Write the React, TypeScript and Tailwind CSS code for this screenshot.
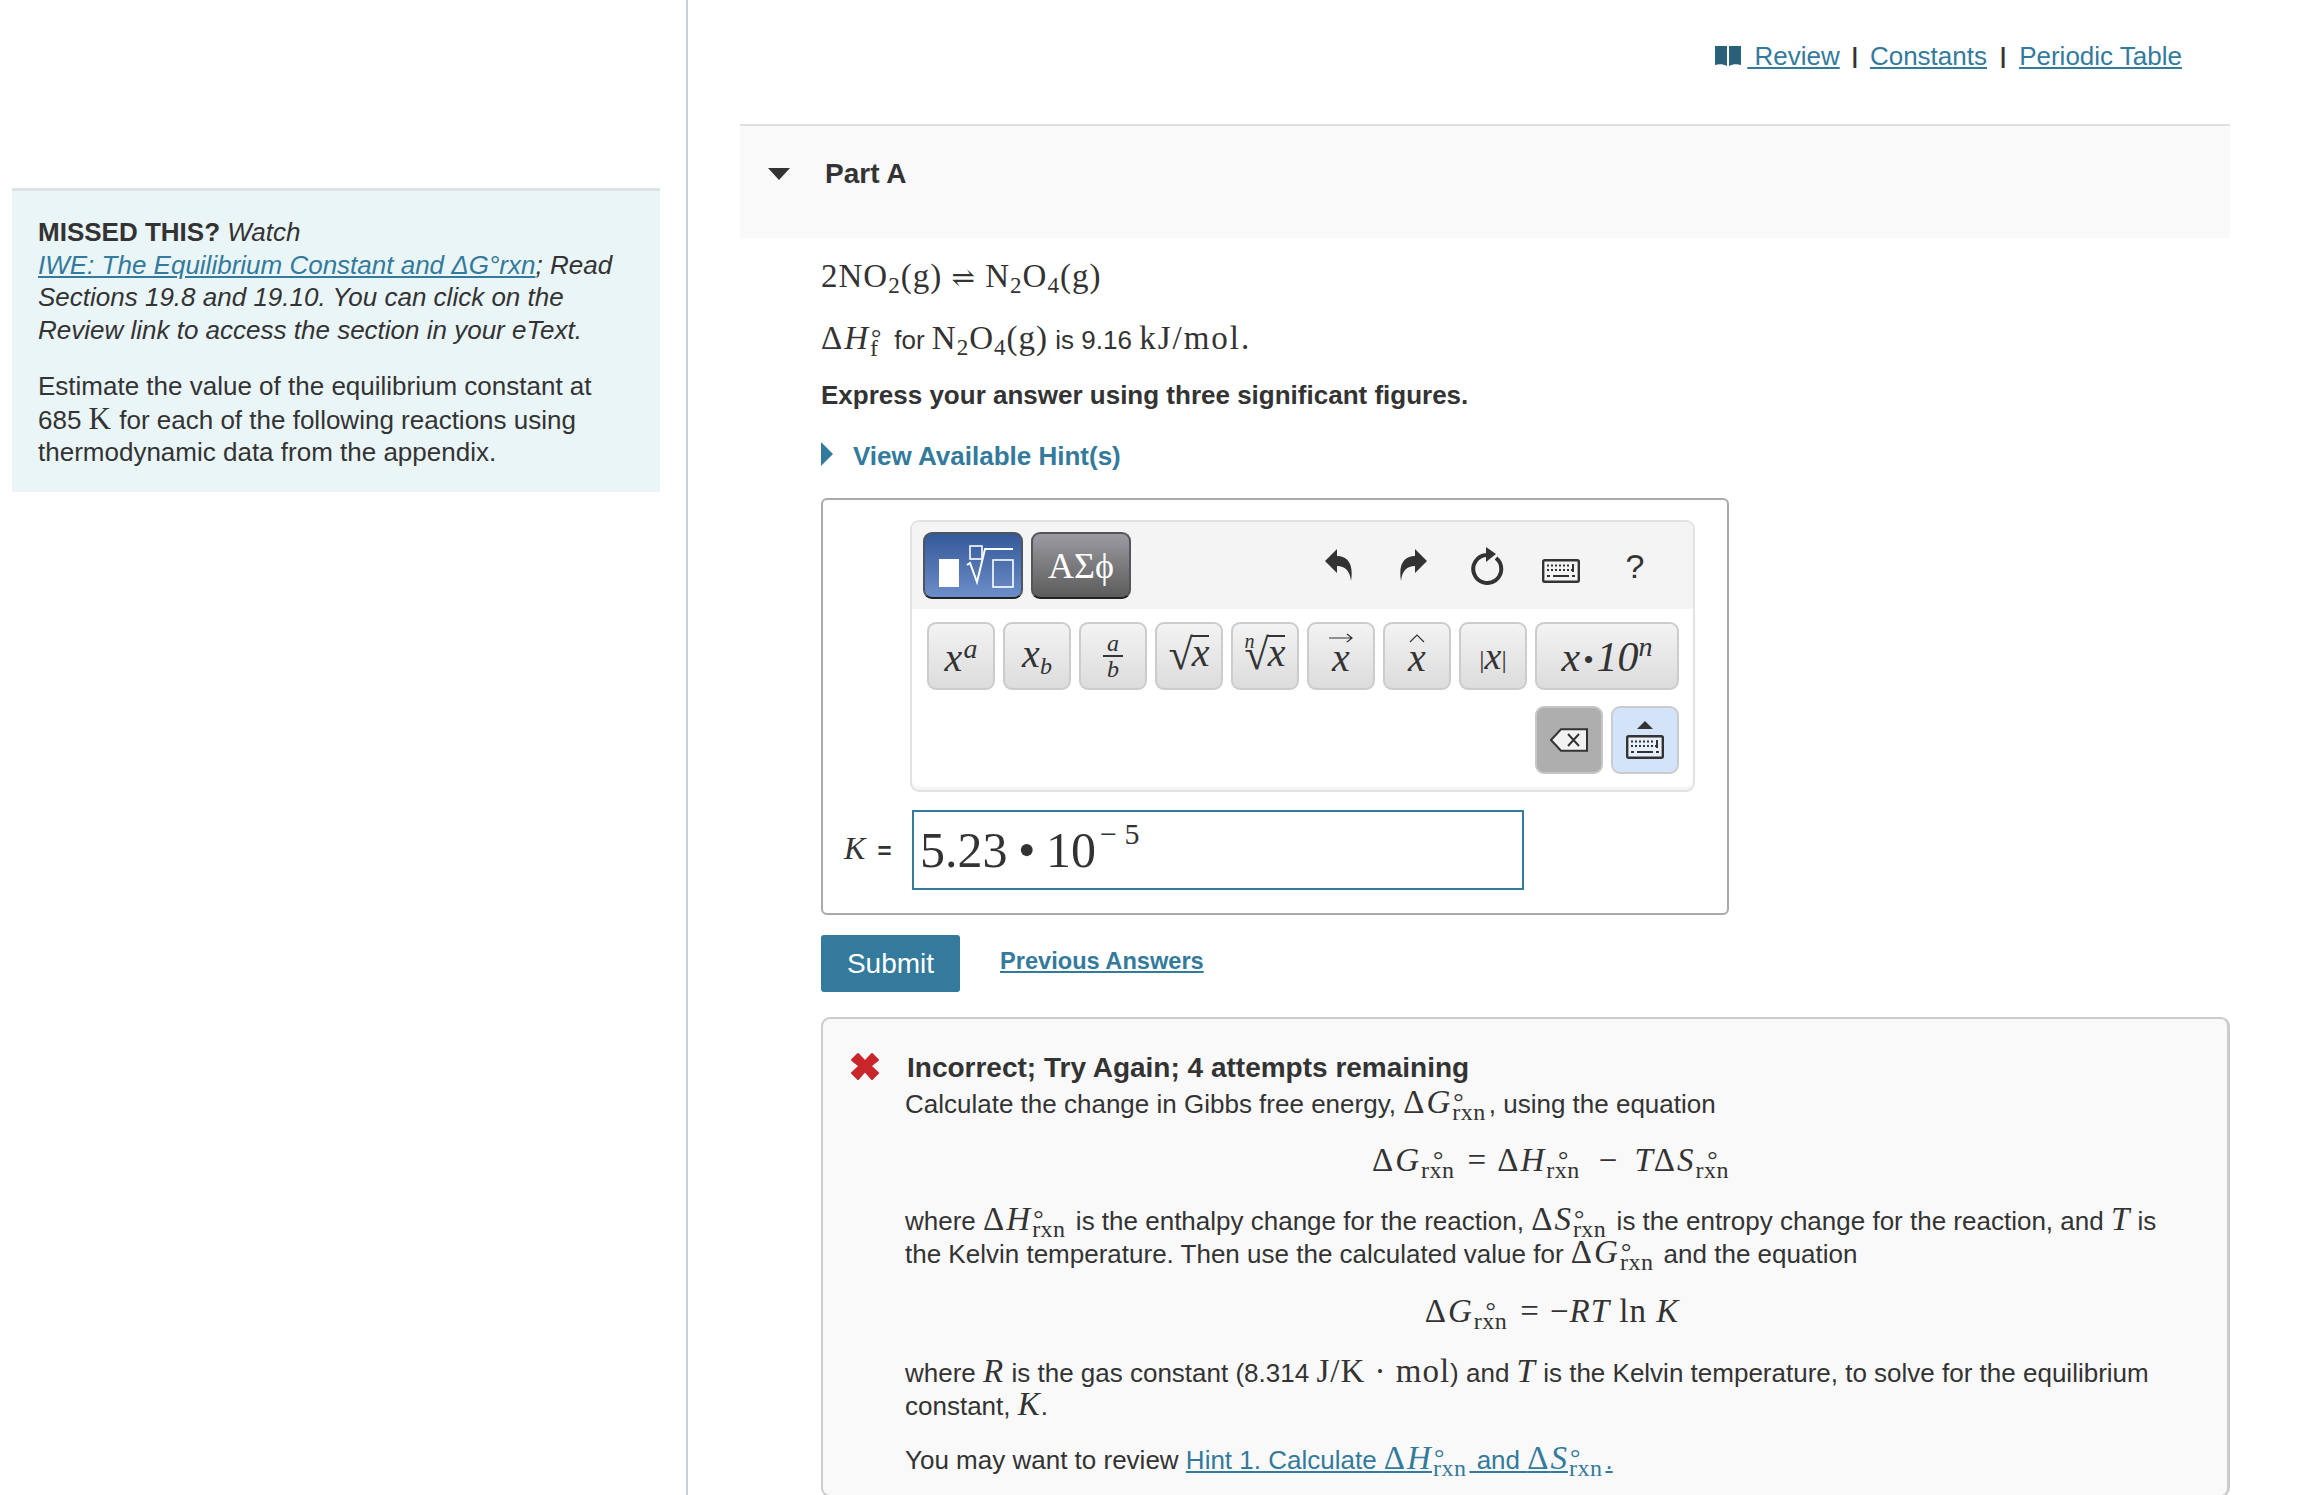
import React from 'react';

const SERIF = "[font-family:'Liberation_Serif','DejaVu_Serif',serif]";

// stacked degree sign over a subscript, sits right after the letter
const Scripts: React.FC<{ sub: string }> = ({ sub }) => (
  <span className="inline-flex flex-col align-[3px] text-[24px] tracking-[0.5px] ml-[1px] mr-[3px] not-italic">
    <span className="text-[26px] leading-[10px] h-[10px] ml-[1px]">°</span>
    <span className="leading-[15px] -mt-[2px]">{sub}</span>
  </span>
);

// delta-style quantity with stacked degree sign and rxn subscript
const Rxn: React.FC<{ letter: string; sub?: string }> = ({ letter, sub = 'rxn' }) => (
  <span className="[font-family:'Liberation_Serif','DejaVu_Serif',serif] text-[33px] tracking-[1px] whitespace-nowrap">
    <span className="tracking-[2px]">Δ</span>
    <i>{letter}</i>
    <Scripts sub={sub} />
  </span>
);

const Mi: React.FC<{ children: React.ReactNode }> = ({ children }) => (
  <i className="[font-family:'Liberation_Serif',serif] text-[33px] tracking-[1px]">{children}</i>
);

const Mr: React.FC<{ children: React.ReactNode }> = ({ children }) => (
  <span className="[font-family:'Liberation_Serif','DejaVu_Serif',serif] text-[33px] tracking-[1px]">{children}</span>
);

const Sub2: React.FC<{ children: React.ReactNode }> = ({ children }) => (
  <span className="text-[0.7em] align-[-0.25em] leading-none">{children}</span>
);

const BookIcon = () => (
  <svg width="26" height="20" viewBox="0 0 26 20" className="mr-[6px]">
    <path d="M0 0 H12 V20 C8 18 4 18 0 19 Z" fill="#2a6079" />
    <path d="M14 0 H26 V19 C22 18 18 18 14 20 Z" fill="#2a6079" />
  </svg>
);

const KeyboardIcon: React.FC<{ fill?: string }> = ({ fill = '#f4f4f4' }) => (
  <svg width="38" height="24" viewBox="0 0 38 24">
    <rect x="1.2" y="1.2" width="35.6" height="21.6" rx="1.5" fill={fill} stroke="#333" strokeWidth="2.4" />
    <path d="M5 6.5 H27" stroke="#333" strokeWidth="2" strokeDasharray="2 2" />
    <path d="M5 11 H31" stroke="#333" strokeWidth="2" strokeDasharray="2 2" />
    <path d="M31 5 V13" stroke="#333" strokeWidth="2" />
    <path d="M5 17 H8 M11 17 H27 M30 17 H33" stroke="#333" strokeWidth="2" />
  </svg>
);

const Arrow: React.FC<{ flip?: boolean }> = ({ flip }) => (
  <svg width="28" height="32" viewBox="0 0 28 32" className={flip ? '-scale-x-100' : ''}>
    <path d="M0 12 L12 0 V7 C22 7 29 14 26 32 C25 22 20 17 12 17 V24 Z" fill="#333" />
  </svg>
);

const ReloadIcon = () => (
  <svg width="34" height="38" viewBox="0 0 34 38">
    <path d="M26 11 A14 14 0 1 1 16 8" fill="none" stroke="#333" strokeWidth="4" />
    <path d="M16 0 L26 7 L16 15 Z" fill="#333" />
  </svg>
);

const TplBtn: React.FC<{ children: React.ReactNode; wide?: boolean }> = ({ children, wide }) => (
  <div className={`${wide ? 'w-[144px]' : 'w-[68px]'} h-[68px] shrink-0 flex items-center justify-center rounded-[9px] border-2 border-[#cccccc] bg-gradient-to-b from-[#f3f3f3] to-[#dcdcdc] text-[#333] [font-family:'Liberation_Serif',serif] italic`}>
    {children}
  </div>
);

const Root: React.FC<{ index?: string }> = ({ index }) => (
  <span className="inline-flex items-start leading-none">
    {index && <span className="text-[20px] -mr-[10px] -mt-[4px]">{index}</span>}
    <span className="not-italic text-[44px] leading-none -mt-[2px]">√</span>
    <span className="border-t-2 border-[#333] text-[40px] leading-[32px] -ml-[1px] h-[34px]">x</span>
  </span>
);

const App: React.FC = () => {
  return (
    <div className="w-[2322px] h-[1495px] overflow-hidden flex bg-white text-[#333] text-[26px] leading-[32.5px] [font-family:'Liberation_Sans',Arial,sans-serif]">
      <aside className="w-[688px] shrink-0 border-r-2 border-[#c4d0dc] pt-[188px] pl-[12px]">
        <div className="w-[648px] h-[304px] bg-[#eaf5f7] border-t-[3px] border-[#e0e3e4] pl-[26px] pt-[25px] whitespace-nowrap">
          <p className="italic">
            <b className="not-italic">MISSED THIS?</b> Watch
            <br />
            <a className="text-[#337a9c] underline">IWE: The Equilibrium Constant and ΔG°rxn</a>; Read
            <br />
            Sections 19.8 and 19.10. You can click on the
            <br />
            Review link to access the section in your eText.
          </p>
          <p className="mt-[24px]">
            Estimate the value of the equilibrium constant at
            <br />
            685 <span className={`${SERIF} text-[31px] tracking-[1px]`}>K</span> for each of the following reactions using
            <br />
            thermodynamic data from the appendix.
          </p>
        </div>
      </aside>

      <main className="flex-1 pl-[52px] w-[1634px]">
        <div className="w-[1490px]">
          <div className="h-[124px] pt-[40px] pr-[48px] flex justify-end items-start leading-[32px]">
            <span className="flex items-center h-[32px]"><BookIcon /></span>
            <a className="text-[#337a9c] underline whitespace-pre"> Review</a>
            <span className="mx-[12px] font-bold text-[22px]">|</span>
            <a className="text-[#337a9c] underline">Constants</a>
            <span className="mx-[13px] font-bold text-[22px]">|</span>
            <a className="text-[#337a9c] underline">Periodic Table</a>
          </div>

          <div className="h-[114px] bg-[#f9f9f9] border-t-2 border-[#e0e0e0] flex items-center pb-[16px] pl-[28px]">
            <span className="w-0 h-0 border-x-[11px] border-x-transparent border-t-[12px] border-t-[#333]"></span>
            <b className="ml-[35px] text-[28px]">Part A</b>
          </div>

          <div className="pl-[81px]">
            <div className={`mt-[18px] h-[40px] leading-[40px] text-[33px] tracking-[1px] whitespace-nowrap ${SERIF}`}>
              2NO<Sub2>2</Sub2>(g) <span className="text-[28px]">⇌</span> N<Sub2>2</Sub2>O<Sub2>4</Sub2>(g)
            </div>
            <div className="mt-[22px] h-[40px] leading-[40px] whitespace-nowrap">
              <span className={`${SERIF} text-[33px] tracking-[1px] mr-[2px]`}>
                <span className="tracking-[2px]">Δ</span><i>H</i>
                <Scripts sub="f" />
              </span>{' '}
              for{' '}
              <span className={`${SERIF} text-[33px] tracking-[1px]`}>N<Sub2>2</Sub2>O<Sub2>4</Sub2>(g)</span> is 9.16{' '}
              <span className={`${SERIF} text-[33px] tracking-[2px]`}>kJ/mol.</span>
            </div>
            <div className="mt-[21px] h-[32px] leading-[32px] font-bold">Express your answer using three significant figures.</div>
            <div className="mt-[29px] h-[32px] leading-[32px] flex items-center font-bold text-[#337a9c]">
              <span className="w-0 h-0 border-y-[12px] border-y-transparent border-l-[12px] border-l-[#337a9c] -mt-[5px]"></span>
              <span className="ml-[20px] text-[26px]">View Available Hint(s)</span>
            </div>

            <div className="mt-[26px] w-[908px] h-[417px] border-2 border-[#aaaaaa] rounded-[6px] pt-[20px] pl-[87px]">
              <div className="w-[785px] h-[272px] border-2 border-[#e2e2e2] rounded-[9px] overflow-hidden shadow-[inset_0_-3px_0_#f4f4f4]">
                <div className="h-[87px] bg-[#f4f4f4] flex items-start pt-[10px] pl-[11px]">
                  <div className="w-[100px] h-[67px] rounded-[9px] border-2 border-[#4f5560] border-b-[#222] bg-gradient-to-b from-[#355a98] to-[#6c8ec9] flex items-center justify-center">
                    <svg width="92" height="46" viewBox="0 0 92 46">
                      <rect x="12" y="16" width="20" height="28" fill="#fff" />
                      <rect x="43" y="3" width="12" height="13" fill="none" stroke="#fff" strokeWidth="1.6" />
                      <path d="M40 22 L43 20 L50 39 L58 6 H86" fill="none" stroke="#fff" strokeWidth="2" />
                      <rect x="66" y="17" width="20" height="27" fill="none" stroke="#fff" strokeWidth="1.6" />
                    </svg>
                  </div>
                  <div className={`ml-[8px] w-[100px] h-[67px] rounded-[9px] border-2 border-[#55565a] border-b-[#222] bg-gradient-to-b from-[#9b9ba1] to-[#5c5c5c] flex items-center justify-center text-white text-[36px] leading-none ${SERIF}`}>
                    ΑΣϕ
                  </div>
                  <div className="ml-auto pr-[21px] flex items-center h-[67px]">
                    <div className="w-[74px] flex justify-center -mt-[2px]"><Arrow /></div>
                    <div className="w-[74px] flex justify-center -mt-[2px]"><Arrow flip /></div>
                    <div className="w-[74px] flex justify-center"><ReloadIcon /></div>
                    <div className="w-[74px] flex justify-center mt-[10px]"><KeyboardIcon /></div>
                    <div className="w-[74px] flex justify-center text-[34px] leading-none">?</div>
                  </div>
                </div>
                <div className="pt-[13px]">
                  <div className="flex gap-[8px] pl-[15px]">
                    <TplBtn><span className="text-[40px] leading-none">x<span className="text-[28px] align-[0.46em] leading-none ml-[1px]">a</span></span></TplBtn>
                    <TplBtn><span className="text-[40px] leading-none">x<span className="text-[24px] align-[-0.3em] leading-none">b</span></span></TplBtn>
                    <TplBtn>
                      <span className="flex flex-col items-center text-[24px] leading-[24px]">
                        <span className="w-[20px] text-center border-b-2 border-[#333]">a</span>
                        <span>b</span>
                      </span>
                    </TplBtn>
                    <TplBtn><Root /></TplBtn>
                    <TplBtn><Root index="n" /></TplBtn>
                    <TplBtn>
                      <span className="flex flex-col items-center text-[40px] leading-[30px] -mt-[6px]">
                        <svg width="24" height="10" viewBox="0 0 24 10"><path d="M0 5 H23 M18 1 L23 5 L18 9" fill="none" stroke="#333" strokeWidth="1.2" /></svg>
                        <span>x</span>
                      </span>
                    </TplBtn>
                    <TplBtn>
                      <span className="flex flex-col items-center text-[40px] leading-[30px] -mt-[6px]">
                        <svg width="16" height="10" viewBox="0 0 16 10"><path d="M1 9 L8 2 L15 9" fill="none" stroke="#333" strokeWidth="1.2" /></svg>
                        <span>x</span>
                      </span>
                    </TplBtn>
                    <TplBtn><span className="text-[38px] leading-none"><span className="not-italic text-[26px] align-[0.05em]">|</span>x<span className="not-italic text-[26px] align-[0.05em]">|</span></span></TplBtn>
                    <TplBtn wide><span className="text-[42px] leading-none whitespace-nowrap">x<span className="text-[30px] mx-[3px] align-[0.05em]">•</span>10<span className="text-[28px] align-[0.55em] leading-none">n</span></span></TplBtn>
                  </div>
                  <div className="flex gap-[8px] justify-end pr-[14px] mt-[16px]">
                    <div className="w-[68px] h-[68px] rounded-[9px] border-2 border-[#c6c6c6] bg-[#aeaeae] flex items-center justify-center">
                      <svg width="38" height="24" viewBox="0 0 38 24">
                        <path d="M1 12 L11 1.2 H37 V22.8 H11 Z" fill="#f2f2f2" stroke="#333" strokeWidth="2" />
                        <path d="M18 6 L29 18 M29 6 L18 18" stroke="#333" strokeWidth="2" />
                      </svg>
                    </div>
                    <div className="w-[68px] h-[68px] rounded-[9px] border-2 border-[#cccccc] bg-[#d3e4fa] flex flex-col items-center justify-center">
                      <span className="w-0 h-0 border-x-[8px] border-x-transparent border-b-[8px] border-b-[#333] mb-[6px]"></span>
                      <KeyboardIcon fill="#e6effb" />
                    </div>
                  </div>
                </div>
              </div>

              <div className="mt-[18px] -ml-[87px] pl-[21px] flex items-center">
                <div className="w-[68px] whitespace-nowrap">
                  <i className={`${SERIF} text-[32px]`}>K</i> <span className="text-[24px] font-bold ml-[5px]">=</span>
                </div>
                <div className={`w-[612px] h-[80px] border-2 border-[#337a9c] pl-[6px] pt-[1px] text-[50px] leading-[74px] [word-spacing:-2px] whitespace-nowrap ${SERIF}`}>
                  5.23 • 10<span className="text-[30px] align-[0.77em] leading-none ml-[4px] [word-spacing:0px]">− 5</span>
                </div>
              </div>
            </div>

            <div className="mt-[20px] flex items-start">
              <div className="w-[139px] h-[57px] bg-[#337a9c] rounded-[3px] text-white text-[28px] leading-[57px] text-center">Submit</div>
              <a className="ml-[40px] mt-[8px] text-[23.6px] leading-[36px] font-bold text-[#337a9c] underline">Previous Answers</a>
            </div>

            <div className="mt-[25px] w-[1409px] h-[480px] bg-[#f9f9f9] border-2 border-r-[3px] border-[#cccccc] rounded-[9px] pt-[33px] whitespace-nowrap">
              <div className="flex items-center h-[32px] leading-[32px]">
                <svg width="28" height="28" viewBox="0 0 28 28" className="ml-[28px] mr-[28px] -mt-[4px]">
                  <path d="M7 2 L14 9.5 L21 2 L27 8 L19.5 14 L27 21 L21 27 L14 19 L7 27 L1 21 L8.5 14 L1 8 Z" fill="#c9262b" stroke="#c9262b" strokeWidth="2" strokeLinejoin="round" />
                </svg>
                <b className="text-[28px]">Incorrect; Try Again; 4 attempts remaining</b>
              </div>
              <div className="pl-[82px]">
                <div className="mt-[2px] h-[32px] leading-[32px]">
                  Calculate the change in Gibbs free energy, <Rxn letter="G" />, using the equation
                </div>
                <div className="mt-[22px] h-[40px] leading-[40px] text-center pr-[28px]">
                  <Rxn letter="G" /><Mr><span className="mx-[10px]">=</span></Mr><Rxn letter="H" /><Mr><span className="mx-[16px]">−</span></Mr><Mi>T</Mi><Rxn letter="S" />
                </div>
                <div className="mt-[23px] h-[33px] leading-[33px]">
                  where <Rxn letter="H" /> is the enthalpy change for the reaction, <Rxn letter="S" /> is the entropy change for the reaction, and <Mi>T</Mi> is
                </div>
                <div className="h-[33px] leading-[33px]">
                  the Kelvin temperature. Then use the calculated value for <Rxn letter="G" /> and the equation
                </div>
                <div className="mt-[22px] h-[40px] leading-[40px] text-center pr-[28px]">
                  <Rxn letter="G" /><Mr><span className="mx-[10px]">=</span>−</Mr><Mi>RT</Mi><Mr> ln </Mr><Mi>K</Mi>
                </div>
                <div className="mt-[24px] h-[33px] leading-[33px]">
                  where <Mi>R</Mi> is the gas constant (8.314 <Mr>J/K · mol</Mr>) and <Mi>T</Mi> is the Kelvin temperature, to solve for the equilibrium
                </div>
                <div className="h-[33px] leading-[33px]">
                  constant, <Mi>K</Mi>.
                </div>
                <div className="mt-[21px] h-[33px] leading-[33px]">
                  You may want to review{' '}
                  <a className="text-[#337a9c] underline">
                    Hint 1. Calculate <Rxn letter="H" /> and <Rxn letter="S" />.
                  </a>
                </div>
              </div>
            </div>
          </div>
        </div>
      </main>
    </div>
  );
};

export default App;
